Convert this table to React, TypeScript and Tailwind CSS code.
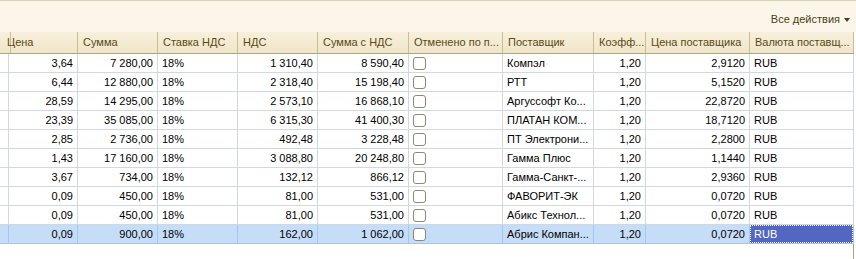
// Табличная часть документа в стиле 1С: тулбар «Все действия», шапка и строки.

const COLS = [
  { key: "ind", title: "", align: "left" },
  { key: "price", title: "Цена", align: "right" },
  { key: "sum", title: "Сумма", align: "right" },
  { key: "rate", title: "Ставка НДС", align: "left" },
  { key: "vat", title: "НДС", align: "right" },
  { key: "total", title: "Сумма с НДС", align: "right" },
  { key: "cancel", title: "Отменено по п...", align: "left" },
  { key: "vendor", title: "Поставщик", align: "left" },
  { key: "coef", title: "Коэфф...", align: "right" },
  { key: "vprice", title: "Цена поставщика", align: "right" },
  { key: "cur", title: "Валюта поставщ...", align: "left" },
] as const;

const GRID =
  "grid grid-cols-[2px_76px_80px_80px_80px_91px_94px_91px_52px_104px_104px]";

interface Row {
  price: string;
  sum: string;
  vat: string;
  total: string;
  vendor: string;
  vprice: string;
}

const ROWS: Row[] = [
  { price: "3,64", sum: "7 280,00", vat: "1 310,40", total: "8 590,40", vendor: "Компэл", vprice: "2,9120" },
  { price: "6,44", sum: "12 880,00", vat: "2 318,40", total: "15 198,40", vendor: "РТТ", vprice: "5,1520" },
  { price: "28,59", sum: "14 295,00", vat: "2 573,10", total: "16 868,10", vendor: "Аргуссофт Ко...", vprice: "22,8720" },
  { price: "23,39", sum: "35 085,00", vat: "6 315,30", total: "41 400,30", vendor: "ПЛАТАН КОМ...", vprice: "18,7120" },
  { price: "2,85", sum: "2 736,00", vat: "492,48", total: "3 228,48", vendor: "ПТ Электрони...", vprice: "2,2800" },
  { price: "1,43", sum: "17 160,00", vat: "3 088,80", total: "20 248,80", vendor: "Гамма Плюс", vprice: "1,1440" },
  { price: "3,67", sum: "734,00", vat: "132,12", total: "866,12", vendor: "Гамма-Санкт-...", vprice: "2,9360" },
  { price: "0,09", sum: "450,00", vat: "81,00", total: "531,00", vendor: "ФАВОРИТ-ЭК", vprice: "0,0720" },
  { price: "0,09", sum: "450,00", vat: "81,00", total: "531,00", vendor: "Абикс Технол...", vprice: "0,0720" },
  { price: "0,09", sum: "900,00", vat: "162,00", total: "1 062,00", vendor: "Абрис Компан...", vprice: "0,0720" },
];

function Checkbox() {
  return (
    <span className="block h-[13px] w-[13px] rounded-[3px] border border-[#8c8a70] bg-white" />
  );
}

function Cell({
  children,
  right,
  selected,
}: {
  children?: React.ReactNode;
  right?: boolean;
  selected?: boolean;
}) {
  return (
    <div
      className={
        "flex h-[19px] items-center overflow-hidden whitespace-nowrap border-b border-r px-[4px] " +
        (right ? "justify-end " : "justify-start ") +
        (selected ? "border-[#a9c6ea]" : "border-[#d2d8e0]")
      }
    >
      {children}
    </div>
  );
}

export default function App() {
  const last = ROWS.length - 1;

  return (
    <div className="h-[259px] w-[856px] overflow-hidden bg-white font-['Liberation_Sans',Arial,sans-serif] text-[11px] text-black">
      {/* ── Toolbar ── */}
      <div className="flex h-8 items-center justify-end border-t border-[#d9cfb2] bg-[#fcf6ea] pr-[6px] pt-[6px]">
        <span className="text-[#4a3f12]">Все действия</span>
        <svg className="ml-[4px] mt-[1px] h-[4px] w-[6px]" viewBox="0 0 6 4" aria-hidden="true">
          <path d="M0 0h6L3 4z" fill="#4a3f12" />
        </svg>
      </div>

      <div className="w-[854px] border-r border-[#aaa482]">
        {/* ── Header ── */}
        <div className={GRID + " h-[22px] border-b border-[#b3a57a] bg-gradient-to-b from-[#f7f0dc] to-[#efe5c9]"}>
          {COLS.map((c) => (
            <div
              key={c.key}
              className="flex items-center overflow-hidden whitespace-nowrap border-r border-[#cbbd93] px-[5px] text-[#5a4912]"
            >
              {c.title}
            </div>
          ))}
        </div>

        {/* ── Rows ── */}
        {ROWS.map((r, i) => {
          const sel = i === last;
          return (
            <div key={i} className={GRID + (sel ? " bg-[#c6ddf8]" : " bg-white")}>
              <Cell selected={sel} />
              <Cell right selected={sel}>{r.price}</Cell>
              <Cell right selected={sel}>{r.sum}</Cell>
              <Cell selected={sel}>18%</Cell>
              <Cell right selected={sel}>{r.vat}</Cell>
              <Cell right selected={sel}>{r.total}</Cell>
              <Cell selected={sel}>
                <Checkbox />
              </Cell>
              <Cell selected={sel}>{r.vendor}</Cell>
              <Cell right selected={sel}>1,20</Cell>
              <Cell right selected={sel}>{r.vprice}</Cell>
              {sel ? (
                <div className="flex h-[19px] items-center border-b border-r border-[#a9c6ea]">
                  <div className="flex h-full w-full items-center border border-dotted border-white bg-[#5367c2] px-[3px] text-white">
                    RUB
                  </div>
                </div>
              ) : (
                <Cell>RUB</Cell>
              )}
            </div>
          );
        })}

        <div className="h-[15px]" />
      </div>
    </div>
  );
}
